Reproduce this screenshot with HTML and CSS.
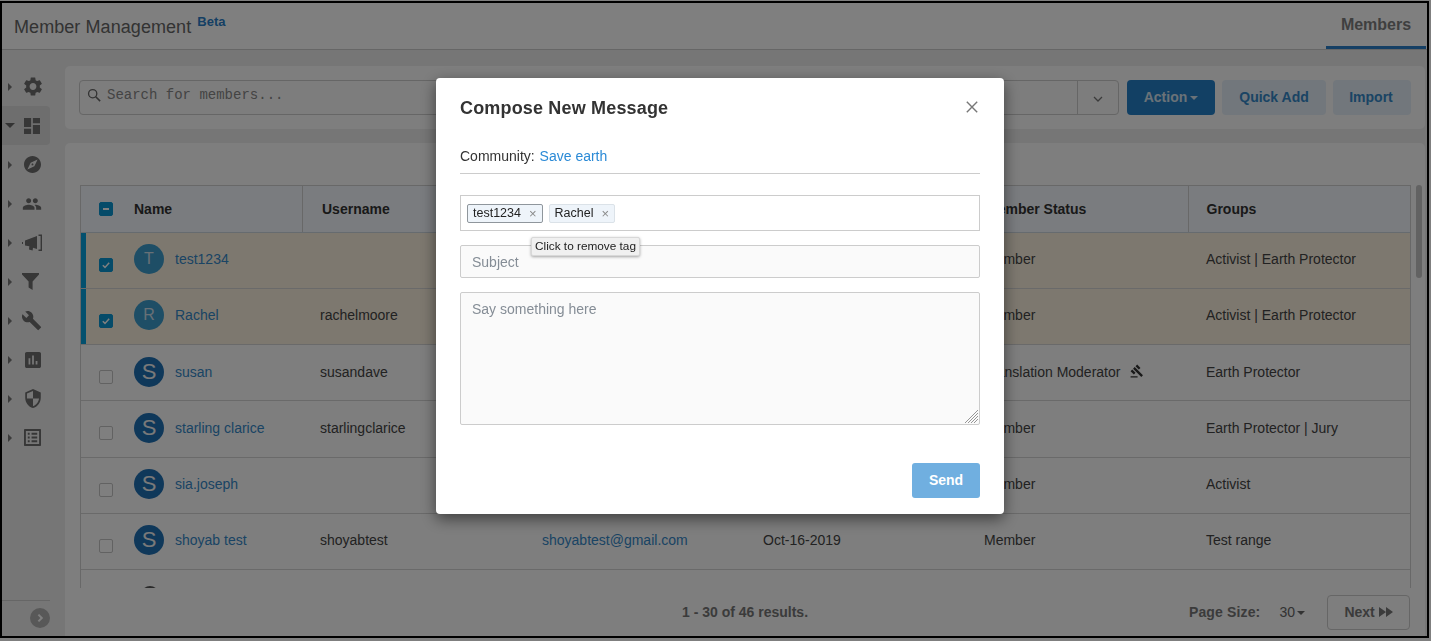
FILE: index.html
```html
<!DOCTYPE html>
<html lang="en">
<head>
<meta charset="utf-8">
<title>Member Management</title>
<link rel="stylesheet" href="styles.css">
</head>
<body>
<div class="frame">
  <header class="topbar">
    <div class="brand"><span class="brand-name">Member Management</span><sup class="beta">Beta</sup></div>
    <a class="tab">Members</a>
  </header>
  <div class="main">
    <aside class="sidebar">
      <nav class="side-items">
        <div class="side-item"><i class="arrow-right"></i><svg class="side-icon gear" viewBox="2.5 2 19 20"><path d="M19.14 12.94c.04-.3.06-.61.06-.94 0-.32-.02-.64-.07-.94l2.03-1.58c.18-.14.23-.41.12-.61l-1.92-3.32c-.12-.22-.37-.29-.59-.22l-2.39.96c-.5-.38-1.03-.7-1.62-.94l-.36-2.54c-.04-.24-.24-.41-.48-.41h-3.84c-.24 0-.43.17-.47.41l-.36 2.54c-.59.24-1.13.57-1.62.94l-2.39-.96c-.22-.08-.47 0-.59.22L2.74 8.87c-.12.21-.08.47.12.61l2.03 1.58c-.05.3-.09.63-.09.94s.02.64.07.94l-2.03 1.58c-.18.14-.23.41-.12.61l1.92 3.32c.12.22.37.29.59.22l2.39-.96c.5.38 1.03.7 1.62.94l.36 2.54c.05.24.24.41.48.41h3.84c.24 0 .44-.17.47-.41l.36-2.54c.59-.24 1.13-.56 1.62-.94l2.39.96c.22.08.47 0 .59-.22l1.92-3.32c.12-.22.07-.47-.12-.61l-2.01-1.58zM12 15.6c-1.98 0-3.6-1.62-3.6-3.6s1.62-3.6 3.6-3.6 3.6 1.62 3.6 3.6-1.62 3.6-3.6 3.6z"/></svg></div>
        <div class="side-item active"><i class="arrow-down"></i><svg class="side-icon" viewBox="3 3 18 18"><path d="M3 13h8V3H3v10zm0 8h8v-6H3v6zm10 0h8V11h-8v10zm0-18v6h8V3h-8z"/></svg></div>
        <div class="side-item"><i class="arrow-right"></i><svg class="side-icon" viewBox="2 2 20 20"><path d="M12 10.9c-.61 0-1.1.49-1.1 1.1s.49 1.1 1.1 1.1c.61 0 1.1-.49 1.1-1.1s-.49-1.1-1.1-1.1zM12 2C6.48 2 2 6.48 2 12s4.48 10 10 10 10-4.48 10-10S17.52 2 12 2zm2.19 12.19L6 18l3.81-8.19L18 6l-3.81 8.19z"/></svg></div>
        <div class="side-item"><i class="arrow-right"></i><svg class="side-icon wide" viewBox="0 0 24 24"><path d="M16 11c1.66 0 2.99-1.34 2.99-3S17.66 5 16 5c-1.66 0-3 1.34-3 3s1.34 3 3 3zm-8 0c1.66 0 2.99-1.34 2.99-3S9.66 5 8 5C6.34 5 5 6.34 5 8s1.34 3 3 3zm0 2c-2.33 0-7 1.17-7 3.5V19h14v-2.5c0-2.33-4.67-3.5-7-3.5zm8 0c-.29 0-.62.02-.97.05 1.16.84 1.97 1.97 1.97 3.45V19h6v-2.5c0-2.33-4.67-3.5-7-3.5z"/></svg></div>
        <div class="side-item"><i class="arrow-right"></i><svg class="side-icon wide" viewBox="0 0 20 18"><path d="M0 8h1v2H0zM3 6.5 L15 2 v13 L11 13.7 L10.6 16.5 L7 15.6 L7.3 12.2 L3 11.5zM16.5 0.5H20V17H16.5V15.6H18.6V2H16.5z"/></svg></div>
        <div class="side-item"><i class="arrow-right"></i><svg class="side-icon funnel" viewBox="0 0 17 17"><path d="M0 0h17v1.4L10.6 8.6V17L6.6 14.6V8.6L0 1.4z"/></svg></div>
        <div class="side-item"><i class="arrow-right"></i><svg class="side-icon wide" viewBox="1 1 23 23"><path d="M22.7 19l-9.1-9.1c.9-2.3.4-5-1.5-6.9-2-2-5-2.4-7.4-1.3L9 6 6 9 1.6 4.7C.4 7.1.9 10.1 2.9 12.1c1.9 1.9 4.6 2.4 6.9 1.5l9.1 9.1c.4.4 1 .4 1.4 0l2.3-2.3c.5-.4.5-1.1.1-1.4z"/></svg></div>
        <div class="side-item"><i class="arrow-right"></i><svg class="side-icon block" viewBox="3 3 18 18"><path d="M19 3H5c-1.1 0-2 .9-2 2v14c0 1.1.9 2 2 2h14c1.1 0 2-.9 2-2V5c0-1.1-.9-2-2-2zM9 17H7v-7h2v7zm4 0h-2V7h2v10zm4 0h-2v-4h2v4z"/></svg></div>
        <div class="side-item"><i class="arrow-right"></i><svg class="side-icon tall" viewBox="3 1 18 22"><path d="M12 1L3 5v6c0 5.55 3.84 10.74 9 12 5.16-1.26 9-6.45 9-12V5l-9-4zm0 10.99h7c-.53 4.12-3.28 7.79-7 8.94V12H5V6.3l7-3.11v8.8z"/></svg></div>
        <div class="side-item"><i class="arrow-right"></i><svg class="side-icon" viewBox="3 3 18 18"><path d="M19 5v14H5V5h14m1.1-2H3.9c-.5 0-.9.4-.9.9v16.2c0 .4.4.9.9.9h16.2c.4 0 .9-.5.9-.9V3.9c0-.5-.5-.9-.9-.9zM11 7h6v2h-6V7zm0 4h6v2h-6v-2zm0 4h6v2h-6zM7 7h2v2H7zm0 4h2v2H7zm0 4h2v2H7z"/></svg></div>
      </nav>
      <div class="side-foot"><span class="expand"><svg viewBox="0 0 10 10"><path d="M3.4 1.6 6.8 5 3.4 8.4" fill="none" stroke="#fff" stroke-width="2"/></svg></span></div>
    </aside>
    <div class="content">
      <section class="search-card">
        <div class="search-group">
          <svg class="search-icon" viewBox="0 0 16 16"><circle cx="6.5" cy="6.5" r="4.7" fill="none" stroke-width="1.5"/><path d="M10 10l5 5" fill="none" stroke-width="1.8"/></svg>
          <input class="search-input" type="text" placeholder="Search for members...">
          <span class="search-drop"><svg viewBox="0 0 10 6"><path d="M1 1l4 4 4-4" fill="none" stroke-width="1.3"/></svg></span>
        </div>
        <button class="btn btn-primary">Action<i class="caret"></i></button>
        <button class="btn btn-soft btn-quick">Quick Add</button>
        <button class="btn btn-soft btn-import">Import</button>
      </section>
      <section class="table-card">
        <div class="table-area">
          <div class="table-wrap">
            <table class="members">
              <colgroup><col class="c-name"><col class="c-user"><col class="c-mail"><col class="c-date"><col class="c-status"><col class="c-group"></colgroup>
              <thead>
                <tr>
                  <th class="name-cell"><div class="name-inner"><span class="check minus"><i></i></span><span class="th-name">Name</span></div></th>
                  <th class="th-wide">Username</th><th></th><th></th><th class="th-wide">Member Status</th><th>Groups</th>
                </tr>
              </thead>
              <tbody>
                <tr class="selected">
                  <td class="name-cell"><div class="name-inner"><span class="check on"><svg viewBox="0 0 10 10"><path d="M1.8 5.2l2.2 2.2 4.2-4.6" fill="none" stroke="#fff" stroke-width="1.5"/></svg></span><span class="avatar light">T</span><a class="link">test1234</a></div></td>
                  <td></td><td></td><td></td><td>Member</td><td>Activist | Earth Protector</td>
                </tr>
                <tr class="selected">
                  <td class="name-cell"><div class="name-inner"><span class="check on"><svg viewBox="0 0 10 10"><path d="M1.8 5.2l2.2 2.2 4.2-4.6" fill="none" stroke="#fff" stroke-width="1.5"/></svg></span><span class="avatar light">R</span><a class="link">Rachel</a></div></td>
                  <td>rachelmoore</td><td></td><td></td><td>Member</td><td>Activist | Earth Protector</td>
                </tr>
                <tr>
                  <td class="name-cell"><div class="name-inner"><span class="check"></span><span class="avatar">S</span><a class="link">susan</a></div></td>
                  <td>susandave</td><td></td><td></td>
                  <td class="nowrap">Translation Moderator <svg class="gavel" viewBox="0 0 24 24"><path d="M1 21h12v2H1zM5.245 8.07l2.83-2.827 14.14 14.142-2.828 2.828zM12.317 1l5.657 5.656-2.83 2.83-5.654-5.66zM3.825 9.485l5.657 5.657-2.828 2.828-5.657-5.657z"/></svg></td>
                  <td>Earth Protector</td>
                </tr>
                <tr>
                  <td class="name-cell"><div class="name-inner"><span class="check"></span><span class="avatar">S</span><a class="link">starling clarice</a></div></td>
                  <td>starlingclarice</td><td></td><td></td><td>Member</td><td>Earth Protector | Jury</td>
                </tr>
                <tr>
                  <td class="name-cell"><div class="name-inner"><span class="check"></span><span class="avatar">S</span><a class="link">sia.joseph</a></div></td>
                  <td></td><td></td><td></td><td>Member</td><td>Activist</td>
                </tr>
                <tr>
                  <td class="name-cell"><div class="name-inner"><span class="check"></span><span class="avatar">S</span><a class="link">shoyab test</a></div></td>
                  <td>shoyabtest</td><td><a class="link">shoyabtest@gmail.com</a></td><td>Oct-16-2019</td><td>Member</td><td>Test range</td>
                </tr>
                <tr>
                  <td class="name-cell"><div class="name-inner"><span class="avatar dark"></span></div></td>
                  <td></td><td></td><td></td><td></td><td></td>
                </tr>
              </tbody>
            </table>
          </div>
          <div class="scroll-track"><div class="scroll-thumb"></div></div>
        </div>
        <footer class="table-foot">
          <span></span>
          <span class="results">1 - 30 of 46 results.</span>
          <div class="pager">
            <span class="page-label">Page Size:</span>
            <span class="page-size">30<i class="caret wide-gap"></i></span>
            <button class="next">Next <svg viewBox="0 0 14 10"><path d="M0 0l7 5-7 5zM7 0l7 5-7 5z"/></svg></button>
          </div>
        </footer>
      </section>
    </div>
  </div>
</div>

<div class="backdrop">
  <div class="modal">
    <div class="modal-head">
      <h2 class="modal-title">Compose New Message</h2>
      <svg class="close" viewBox="0 0 12 12"><path d="M.8.8l10.4 10.4M11.2.8L.8 11.2" fill="none" stroke-width="1.4"/></svg>
    </div>
    <div class="community">Community: <a class="modal-link">Save earth</a></div>
    <div class="tag-box">
      <span class="tag hovered">test1234<b class="tag-x">×</b></span>
      <span class="tag">Rachel<b class="tag-x">×</b></span>
      <span class="tooltip">Click to remove tag</span>
    </div>
    <input class="field subject" type="text" placeholder="Subject">
    <div class="body-wrap">
      <textarea class="field body-field" placeholder="Say something here"></textarea>
      <svg class="grip" viewBox="0 0 13 13"><path d="M13 0L0 13M13 3L3 13M13 6L6 13M13 9L9 13" fill="none" stroke-width=".9"/></svg>
    </div>
    <div class="modal-foot"><button class="send">Send</button></div>
  </div>
</div>
</body>
</html>
```
FILE: styles.css
```css
* { box-sizing: border-box; }
html, body { height: 100%; }
body {
  margin: 0;
  padding-top: 1px;
  background: #fff;
  font-family: "Liberation Sans", Arial, sans-serif;
  font-size: 14px;
  color: #333;
  overflow: hidden;
}
.frame {
  width: 1429px;
  height: 637px;
  border: 2px solid #000;
  display: flex;
  flex-direction: column;
  background: #ededed;
}
.topbar {
  height: 47px;
  flex: none;
  background: #fff;
  border-bottom: 1px solid #ccc;
  display: flex;
  justify-content: space-between;
  padding: 0 1px 0 12px;
}
.brand { display: flex; align-items: flex-start; padding-top: 13px; }
.brand-name { font-size: 18px; line-height: 22px; color: #666; letter-spacing: .07px; }
.beta { font-size: 13px; line-height: 15px; font-weight: 700; color: #2a7fc8; margin: -2px 0 0 6px; }
.tab {
  width: 100px;
  height: 46px;
  margin-bottom: -1px;
  border-bottom: 3px solid #2a7fc8;
  font-size: 16px;
  font-weight: 700;
  color: #7f7f7f;
  text-align: center;
  line-height: 44px;
}
.main { flex: 1; min-height: 0; display: flex; }

.sidebar { width: 63px; flex: none; display: flex; flex-direction: column; }
.side-items { flex: 1; padding-top: 17px; }
.side-item {
  width: 48px;
  height: 39px;
  display: flex;
  align-items: center;
  border-radius: 0 4px 4px 0;
}
.side-item.active { background: #dcdcdc; }
.arrow-right { width: 0; height: 0; margin-left: 6px; border-left: 4px solid #777; border-top: 4.5px solid transparent; border-bottom: 4.5px solid transparent; }
.arrow-down { width: 0; height: 0; margin-left: 3px; border-top: 5px solid #666; border-left: 5px solid transparent; border-right: 5px solid transparent; }
.side-icon { width: 17px; height: 17px; margin-left: 12px; fill: #6e6e6e; flex: none; }
.side-item.active .side-icon { margin-left: 9px; width: 16px; height: 16px; }
.side-icon.gear { width: 18px; height: 19px; margin-left: 12px; margin-top: -1px; }
.side-icon.wide { width: 20px; height: 20px; margin-left: 10px; }
.side-icon.funnel { margin-left: 10px; }
.side-icon.block { width: 16px; height: 16px; margin-left: 12.5px; }
.side-icon.tall { width: 16px; height: 19px; margin-left: 12.5px; }
.side-foot {
  width: 48px;
  height: 36px;
  border-top: 1px solid #ccc;
  display: flex;
  justify-content: flex-end;
  padding-top: 7px;
}
.expand { width: 20px; height: 20px; border-radius: 50%; background: #b0b0b0; display: flex; align-items: center; justify-content: center; }
.expand svg { width: 10px; height: 10px; }

.content { flex: 1; min-width: 0; display: flex; flex-direction: column; gap: 14px; padding: 16px 2px 0 0; }
.search-card {
  height: 63px;
  flex: none;
  background: #fcfcfc;
  border-radius: 5px;
  padding: 14px 14px;
  display: flex;
  gap: 7px;
}
.search-group {
  flex: 1;
  margin-right: 1px;
  display: flex;
  align-items: center;
  background: #fbfbfb;
  border: 1px solid #ccc;
  border-radius: 4px;
  padding-left: 7px;
}
.search-icon { width: 14px; height: 14px; stroke: #666; flex: none; margin-right: 6px; margin-top: -5px; }
.search-input {
  flex: 1;
  border: 0;
  background: transparent;
  outline: 0;
  padding: 0 0 5px;
  font-family: "Liberation Mono", "Courier New", monospace;
  font-size: 14px;
}
.search-input::placeholder { color: #888; opacity: 1; }
.search-drop { width: 41px; height: 100%; border-left: 1px solid #ccc; display: flex; align-items: center; justify-content: center; }
.search-drop svg { width: 10px; height: 6px; stroke: #777; margin-top: 2px; }
.btn {
  height: 35px;
  border: 0;
  border-radius: 4px;
  font: 700 14px "Liberation Sans", Arial, sans-serif;
  padding: 0 0 2px;
  flex: none;
}
.btn-primary { width: 88px; background: #2480c8; color: #d4e4f0; }
.btn-soft { background: #e4eef8; color: #3488c8; }
.btn-quick { width: 104px; }
.btn-import { width: 78px; padding-right: 2px; }
.caret { display: inline-block; width: 0; height: 0; margin-left: 3px; vertical-align: 2px; border-top: 4px solid currentColor; border-left: 4px solid transparent; border-right: 4px solid transparent; }
.caret.wide-gap { margin-left: 2px; }

.table-card {
  flex: 1;
  min-height: 0;
  background: #fcfcfc;
  border-radius: 5px 5px 0 0;
  display: flex;
  flex-direction: column;
  padding-top: 42px;
}
.table-area { flex: 1; min-height: 0; display: flex; padding-left: 15px; }
.table-wrap {
  width: 1331px;
  height: 100%;
  overflow: hidden;
  border: solid #d0d0d0;
  border-width: 1px 1px 0;
}
.scroll-track { width: 6px; margin-left: 5px; }
.scroll-thumb { height: 93px; background: #c4c4c4; border-radius: 3px; }
.members { width: 1329px; border-collapse: collapse; table-layout: fixed; font-size: 14px; }
.c-name { width: 221px; }
.c-user { width: 222px; }
.c-mail { width: 221px; }
.c-date { width: 221px; }
.c-status { width: 222px; }
.c-group { width: 222px; }
.members th {
  height: 46px;
  background: #f5f9fe;
  border-left: 1px solid #d0d0d0;
  border-bottom: 1px solid #ccd6de;
  padding: 0 18px;
  text-align: left;
  font-weight: 700;
  color: #333;
}
.members th.name-cell { border-left: 0; }
.members th.th-wide { padding-left: 19.5px; }
.members td {
  height: 56.25px;
  padding: 0 18px 2px;
  border-bottom: 1px solid #d4d4d4;
  color: #444;
  white-space: nowrap;
}
.members td, .members th { overflow: hidden; }
.members .name-cell { padding-left: 18px; padding-right: 0; }
.selected td { background: #fbf1df; }
.selected .name-cell { box-shadow: inset 5px 0 0 #06a0dc; }
.name-inner { display: flex; align-items: center; }
.check {
  width: 14px;
  height: 14px;
  flex: none;
  border: 1px solid #c4c4c4;
  border-radius: 2px;
  background: #fff;
  margin-top: 11px;
  display: flex;
  align-items: center;
  justify-content: center;
}
.check.on { background: #0a96d2; border-color: #0a96d2; }
.check.on svg { width: 10px; height: 10px; }
.check.minus { background: #0a96d2; border-color: #0a96d2; margin-top: 0; }
.check.minus i { width: 6px; height: 2px; background: #fff; }
.th-name { margin-left: 21px; }
.avatar {
  width: 30px;
  height: 30px;
  flex: none;
  border-radius: 50%;
  background: #1f70b4;
  color: #f2f2f2;
  margin-left: 21px;
  font-size: 22px;
  line-height: 30px;
  text-align: center;
}
.avatar.light { background: #3c9ccc; font-size: 16px; color: #d0e0ec; }
.avatar.dark { background: #555; width: 18px; height: 18px; margin: -3px 0 0 42px; }
.link { color: #3488c8; margin-left: 11px; }
td > .link { margin-left: 0; }
.nowrap { overflow: visible; }
.gavel { width: 14px; height: 14px; margin-left: 6px; vertical-align: -1px; fill: #333; }
.table-foot {
  height: 48px;
  flex: none;
  display: grid;
  grid-template-columns: 1fr auto 1fr;
  align-items: center;
  padding: 0 15px;
  font-weight: 700;
  font-size: 14px;
  color: #777;
}
.pager { display: flex; align-items: center; justify-content: flex-end; }
.page-label { margin-right: 19px; letter-spacing: .15px; }
.page-size { font-weight: 400; margin-right: 22px; color: #666; }
.next {
  width: 83px;
  height: 35px;
  background: transparent;
  border: 1px solid #ccc;
  border-radius: 4px;
  font: 700 14px "Liberation Sans", Arial, sans-serif;
  color: #777;
  padding: 0;
}
.next svg { width: 14px; height: 10px; fill: #777; }

.backdrop { position: fixed; inset: 0; background: rgba(0, 0, 0, .5); }
.modal {
  position: absolute;
  left: 436px;
  top: 78px;
  width: 568px;
  height: 436px;
  background: #fff;
  border-radius: 4px;
  padding: 0 24px;
  box-shadow: 0 5px 15px rgba(0, 0, 0, .5);
}
.modal-head { height: 60px; display: flex; align-items: center; justify-content: space-between; }
.modal-title { margin: 0; font-size: 18px; font-weight: 700; color: #333; letter-spacing: .17px; }
.close { width: 12px; height: 12px; margin-right: 2px; stroke: #777; margin-top: -2px; }
.community { padding: 8px 0 7px; line-height: 20px; border-bottom: 1px solid #ccc; margin-bottom: 21px; color: #333; }
.modal-link { color: #2b8ad6; margin-left: 1px; }
.tag-box {
  height: 36px;
  border: 1px solid #ccc;
  position: relative;
  display: flex;
  align-items: center;
  gap: 6px;
  padding: 1px 0 0 6px;
  margin-bottom: 14px;
}
.tag {
  height: 19px;
  padding: 0 5px;
  background: #eef4fa;
  border: 1px solid #dbe2e8;
  border-radius: 2px;
  font-size: 12.5px;
  line-height: 17px;
  color: #222;
  display: flex;
}
.tag.hovered { border-color: #8f969c; }
.tag-x { font-weight: 400; color: #8a8a8a; margin-left: 8px; font-size: 13px; }
.tooltip {
  position: absolute;
  left: 70px;
  top: 41px;
  width: 109px;
  height: 19px;
  background: #f0f0f0;
  border: 1px solid #d8d8d8;
  border-radius: 2px;
  box-shadow: 0 1px 3px rgba(0, 0, 0, .35);
  font-size: 11.8px;
  line-height: 17px;
  text-align: center;
  color: #222;
  z-index: 2;
  white-space: nowrap;
}
.field {
  display: block;
  width: 100%;
  background: #fafafa;
  border: 1px solid #ccc;
  border-radius: 2px;
  font: 14px "Liberation Sans", Arial, sans-serif;
  padding: 0 11px;
  outline: 0;
}
.field::placeholder { color: #858d96; opacity: 1; }
.subject { height: 33px; margin-bottom: 14px; }
.body-wrap { position: relative; }
.body-field { height: 133px; padding-top: 8px; resize: none; }
.grip { position: absolute; right: 2px; bottom: 2px; width: 13px; height: 13px; stroke: #8a8a8a; }
.modal-foot { margin-top: 38px; display: flex; justify-content: flex-end; }
.send {
  width: 68px;
  height: 35px;
  border: 0;
  border-radius: 3px;
  background: #70afe0;
  color: #fff;
  padding: 0 0 2px;
  font: 700 14px "Liberation Sans", Arial, sans-serif;
}
```
